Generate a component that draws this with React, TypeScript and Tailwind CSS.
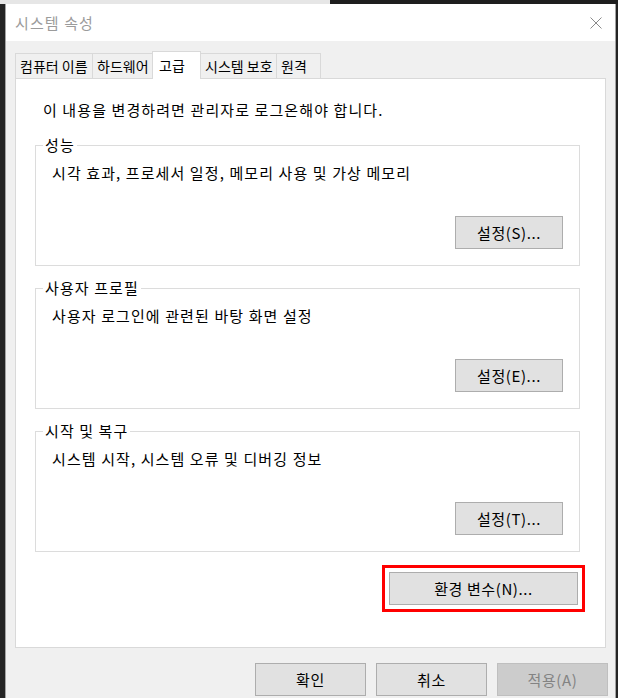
import React from "react"
import clsx from "clsx"

const tabs = [
  { label: "컴퓨터 이름", w: "w-[78px]" },
  { label: "하드웨어", w: "w-[61px]" },
  { label: "고급", w: "w-[49px]", active: true },
  { label: "시스템 보호", w: "w-[77px]" },
  { label: "원격", w: "w-[45px]" },
]

const groups = [
  { title: "성능", text: "시각 효과, 프로세서 일정, 메모리 사용 및 가상 메모리", btn: "설정(S)..." },
  { title: "사용자 프로필", text: "사용자 로그인에 관련된 바탕 화면 설정", btn: "설정(E)..." },
  { title: "시작 및 복구", text: "시스템 시작, 시스템 오류 및 디버깅 정보", btn: "설정(T)..." },
]

function Button({ children, className, disabled }: { children: React.ReactNode; className?: string; disabled?: boolean }) {
  return (
    <button
      className={clsx(
        "h-[33px] border text-[15px] leading-[20px] tracking-[0.6px] flex items-center justify-center",
        disabled ? "bg-[#cccccc] border-[#bfbfbf] text-[#838383]" : "bg-[#e1e1e1] border-[#adadad] text-black",
        className
      )}
    >
      {children}
    </button>
  )
}

export default function App() {
  return (
    <div className="w-[618px] h-[698px] overflow-hidden bg-[#242424] font-['Noto_Sans_CJK_KR','Noto_Sans',sans-serif] text-black tracking-[1.1px]">
      <div className="flex h-[4px]">
        <div className="w-[330px] bg-[#e6e6e6]" />
        <div className="flex-1 bg-[#1e1e1e]" />
      </div>

      <div className="ml-[5px] w-[611px] h-[694px] border-x border-[#a3a3a3] bg-[#f0f0f0] flex flex-col">
        {/* title bar */}
        <div className="h-[37px] bg-white flex items-center justify-between pl-[9px] pr-[13px]">
          <span className="text-[15px] leading-[20px] text-[#9b9b9b]">시스템 속성</span>
          <svg width="12" height="12" viewBox="0 0 12 12">
            <path d="M0.5 0.5L11.5 11.5M11.5 0.5L0.5 11.5" stroke="#8a8a8a" strokeWidth="1" fill="none" />
          </svg>
        </div>

        <div className="px-[9px] pt-[10px] flex flex-col">
          {/* tabs */}
          <div className="flex items-end h-[27px]">
            {tabs.map((t, i) => (
              <div
                key={t.label}
                className={clsx(
                  "flex items-center border border-b-0 border-[#d9d9d9] text-[14px] leading-[20px] tracking-normal whitespace-nowrap",
                  t.w,
                  i > 0 && "-ml-px",
                  t.active ? "h-[28px] -mb-px relative z-10 bg-white pl-[6px] pb-[2px]" : "h-[25px] bg-[#f0f0f0] pl-[4px]"
                )}
              >
                {t.label}
              </div>
            ))}
          </div>

          {/* panel */}
          <div className="h-[570px] bg-white border border-[#d9d9d9] flex flex-col">
            <p className="pl-[27px] pt-[21px] text-[15px] leading-[20px]">이 내용을 변경하려면 관리자로 로그온해야 합니다.</p>

            <div className="flex flex-col gap-[12px] mt-[15px] ml-[19px] w-[545px]">
              {groups.map((g) => (
                <fieldset key={g.title} className="border border-[#dcdcdc]">
                  <legend className="ml-[7px] px-[2px] text-[15px] leading-[20px]">{g.title}</legend>
                  <div className="px-[16px] pt-[8px] pb-[16px] flex flex-col">
                    <p className="text-[15px] leading-[20px]">{g.text}</p>
                    <div className="flex justify-end mt-[33px]">
                      <Button className="w-[108px]">{g.btn}</Button>
                    </div>
                  </div>
                </fieldset>
              ))}
            </div>

            <div className="self-end mt-[13px] mr-[20px] border-[3px] border-[#ff0000] px-[4px] py-[4px]">
              <Button className="w-[189px]">환경 변수(N)...</Button>
            </div>
          </div>

          {/* bottom buttons */}
          <div className="flex justify-end gap-[10px] mt-[15px] -mr-[2px]">
            <Button className="w-[111px]">확인</Button>
            <Button className="w-[111px]">취소</Button>
            <Button className="w-[111px]" disabled>적용(A)</Button>
          </div>
        </div>
      </div>
    </div>
  )
}
